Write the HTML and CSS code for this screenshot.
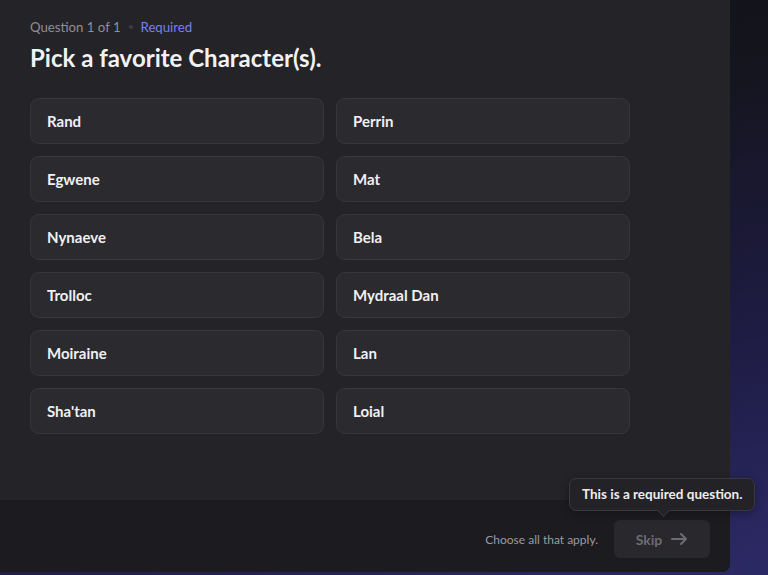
FILE: index.html
```html
<!DOCTYPE html>
<html>
<head>
<meta charset="utf-8">
<link rel="stylesheet" href="styles.css">
</head>
<body>
<div class="stage">
  <div class="modal">
    <div class="body">
      <div class="meta">
        <span class="count">Question 1 of 1</span>
        <span class="dot"></span>
        <span class="req">Required</span>
      </div>
      <h1 class="title">Pick a favorite Character(s).</h1>
      <div class="options">
        <div class="option">Rand</div>
        <div class="option">Perrin</div>
        <div class="option">Egwene</div>
        <div class="option">Mat</div>
        <div class="option">Nynaeve</div>
        <div class="option">Bela</div>
        <div class="option">Trolloc</div>
        <div class="option">Mydraal Dan</div>
        <div class="option">Moiraine</div>
        <div class="option">Lan</div>
        <div class="option">Sha'tan</div>
        <div class="option">Loial</div>
      </div>
    </div>
    <div class="footer">
      <span class="hint">Choose all that apply.</span>
      <div class="skip-wrap">
        <div class="tooltip">This is a required question.</div>
        <button class="skip">Skip
          <svg width="17" height="12" viewBox="0 0 17 12" fill="none" stroke="currentColor" stroke-width="2" stroke-linecap="round" stroke-linejoin="round"><path d="M1 6h14M10 1l5 5-5 5"/></svg>
        </button>
      </div>
    </div>
  </div>
</div>
</body>
</html>
```
FILE: styles.css
```css
* { box-sizing: border-box; }
html, body { margin: 0; padding: 0; }
body {
  width: 768px;
  height: 575px;
  overflow: hidden;
  font-family: Lato, "Noto Sans", sans-serif;
  background: linear-gradient(165deg, #0f0f14 0%, #15151f 35%, #1f1c45 70%, #2c2a66 100%);
}
.stage { width: 768px; height: 575px; }
.modal {
  width: 730px;
  height: 572px;
  background: #232328;
  border-radius: 0 0 8px 0;
  display: flex;
  flex-direction: column;
}
.body {
  flex: 1;
  padding: 17px 30px 0 30px;
}
.meta {
  display: flex;
  align-items: center;
  gap: 8px;
  font-size: 13.2px;
  line-height: 20px;
  height: 20px;
}
.count { color: #8f8f98; }
.dot { width: 4px; height: 4px; border-radius: 50%; background: #3d3d44; }
.req { color: #7b7ff0; }
.title {
  margin: 6px 0 0 0;
  font-size: 24px;
  line-height: 30px;
  font-weight: 700;
  color: #f2f2f4;
}
.options {
  margin-top: 25px;
  display: grid;
  grid-template-columns: 294px 294px;
  column-gap: 12px;
  row-gap: 12px;
}
.option {
  height: 46px;
  border: 1px solid #36363c;
  border-radius: 9px;
  background: #2a2a2f;
  color: #f0f0f3;
  font-size: 15px;
  font-weight: 700;
  display: flex;
  align-items: center;
  padding-left: 16px;
  padding-bottom: 1px;
}
.footer {
  height: 72px;
  background: #1c1c20;
  border-radius: 0 0 8px 0;
  display: flex;
  align-items: center;
  justify-content: flex-end;
  padding-right: 20px;
  gap: 16px;
}
.hint { color: #9a9aa2; font-size: 12px; padding-top: 6px; }
.skip-wrap { position: relative; margin-top: 6px; }
.skip {
  width: 96px;
  height: 38px;
  border: none;
  border-radius: 6px;
  background: #28282d;
  color: #6c6c74;
  font-family: inherit;
  font-size: 14px;
  font-weight: 700;
  display: flex;
  align-items: center;
  justify-content: center;
  gap: 9px;
}
.tooltip {
  position: absolute;
  left: -45px;
  bottom: 47px;
  white-space: nowrap;
  background: #232327;
  border: 1px solid #38383e;
  border-radius: 7px;
  color: #ececef;
  font-size: 13.5px;
  font-weight: 700;
  padding: 6px 12px;
  line-height: 19px;
  box-shadow: 0 2px 8px rgba(0,0,0,0.3);
}
.tooltip::after {
  content: "";
  position: absolute;
  left: 89px;
  bottom: -5px;
  width: 8px;
  height: 8px;
  background: #232327;
  border-right: 1px solid #38383e;
  border-bottom: 1px solid #38383e;
  transform: rotate(45deg);
}
```
